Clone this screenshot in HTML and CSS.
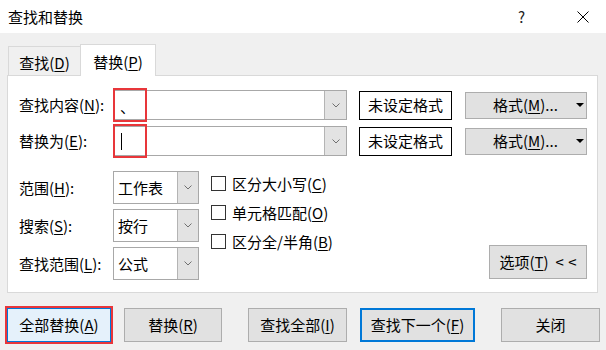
FILE: index.html
```html
<!DOCTYPE html>
<html>
<head>
    <meta charset="utf-8">
    <title>查找和替换</title>
    <link rel="stylesheet" href="styles.css">
</head>
<body>
    <div class="titlebar">
        <span class="title">查找和替换</span>
        <span class="help">?</span>
        <svg class="close" width="12" height="12" viewBox="0 0 12 12">
            <path d="M0.5 0.5 L11.5 11.5 M11.5 0.5 L0.5 11.5" stroke="#000" stroke-width="1" fill="none"/>
        </svg>
    </div>

    <div class="tabs">
        <div class="tab tab-find">查找(<u>D</u>)</div>
        <div class="tab tab-replace">替换(<u>P</u>)</div>
    </div>

    <div class="panel">
        <div class="field-row">
            <span class="label">查找内容(<u>N</u>):</span>
            <div class="combo">
                <span class="combo-text comma">、</span>
                <span class="combo-btn"><svg width="8" height="5" viewBox="0 0 8 5"><path d="M0.5 0.5 L4 4 L7.5 0.5" stroke="#707070" fill="none"/></svg></span>
                <span class="mark"></span>
            </div>
            <div class="unset">未设定格式</div>
            <button class="format-btn">格式(<u>M</u>)...<span class="caret-down"></span></button>
        </div>
        <div class="field-row">
            <span class="label">替换为(<u>E</u>):</span>
            <div class="combo">
                <span class="combo-text"><span class="caret"></span></span>
                <span class="combo-btn"><svg width="8" height="5" viewBox="0 0 8 5"><path d="M0.5 0.5 L4 4 L7.5 0.5" stroke="#707070" fill="none"/></svg></span>
                <span class="mark"></span>
            </div>
            <div class="unset">未设定格式</div>
            <button class="format-btn">格式(<u>M</u>)...<span class="caret-down"></span></button>
        </div>

        <div class="options">
            <div class="selects">
                <div class="select-row">
                    <span class="label">范围(<u>H</u>):</span>
                    <div class="combo combo-small">
                        <span class="combo-text">工作表</span>
                        <span class="combo-btn"><svg width="8" height="5" viewBox="0 0 8 5"><path d="M0.5 0.5 L4 4 L7.5 0.5" stroke="#707070" fill="none"/></svg></span>
                    </div>
                </div>
                <div class="select-row">
                    <span class="label">搜索(<u>S</u>):</span>
                    <div class="combo combo-small">
                        <span class="combo-text">按行</span>
                        <span class="combo-btn"><svg width="8" height="5" viewBox="0 0 8 5"><path d="M0.5 0.5 L4 4 L7.5 0.5" stroke="#707070" fill="none"/></svg></span>
                    </div>
                </div>
                <div class="select-row">
                    <span class="label">查找范围(<u>L</u>):</span>
                    <div class="combo combo-small">
                        <span class="combo-text">公式</span>
                        <span class="combo-btn"><svg width="8" height="5" viewBox="0 0 8 5"><path d="M0.5 0.5 L4 4 L7.5 0.5" stroke="#707070" fill="none"/></svg></span>
                    </div>
                </div>
            </div>

            <div class="checks">
                <label class="check"><span class="box"></span>区分大小写(<u>C</u>)</label>
                <label class="check"><span class="box"></span>单元格匹配(<u>O</u>)</label>
                <label class="check"><span class="box"></span>区分全/半角(<u>B</u>)</label>
            </div>

            <button class="btn more-btn">选项(<u>T</u>)<span class="arrows">&lt; &lt;</span></button>
        </div>
    </div>

    <div class="actions">
        <button class="btn btn-all">全部替换(<u>A</u>)</button>
        <button class="btn btn-replace">替换(<u>R</u>)</button>
        <button class="btn btn-findall">查找全部(<u>I</u>)</button>
        <button class="btn btn-next">查找下一个(<u>F</u>)</button>
        <button class="btn btn-close">关闭</button>
    </div>
</body>
</html>
```

FILE: styles.css
```css
body {
    margin: 0;
    width: 606px;
    height: 350px;
    overflow: hidden;
    background-color: #f0f0f0;
    font-family: "Noto Sans CJK SC", sans-serif;
    font-size: 15px;
    line-height: 20px;
    color: #000;
}
u {
    text-decoration-thickness: 1px;
    text-underline-offset: 2px;
}
.titlebar {
    display: flex;
    align-items: center;
    height: 33px;
    padding-left: 8px;
    background-color: #fff;
}
.help {
    margin-left: auto;
    margin-right: 52px;
    color: #222;
}
.close {
    margin-right: 17px;
}
.tabs {
    display: flex;
    align-items: flex-end;
    height: 31px;
    margin-top: 11px;
    padding-left: 8px;
}
.tab {
    display: flex;
    align-items: center;
    justify-content: center;
    box-sizing: border-box;
    height: 29px;
    padding-top: 3px;
    border: 1px solid #d9d9d9;
    border-bottom: none;
    background-color: #f0f0f0;
}
.tab-find {
    width: 72px;
    border-right: none;
}
.tab-replace {
    position: relative;
    z-index: 1;
    width: 76px;
    height: 32px;
    padding-top: 2px;
    margin-bottom: -1px;
    background-color: #fff;
}
.panel {
    margin: 0 8px 0 7px;
    padding: 14px 10px 12px 11px;
    background-color: #fff;
    border: 1px solid #d9d9d9;
}
.field-row {
    display: flex;
    align-items: center;
    height: 30px;
}
.field-row + .field-row {
    margin-top: 6px;
}
.label {
    flex: none;
    width: 94px;
}
.combo {
    position: relative;
    display: flex;
    flex: none;
    box-sizing: border-box;
    width: 234px;
    height: 30px;
    border: 1px solid #a8a8a8;
    background-color: #fff;
}
.combo-small {
    width: 86px;
    height: 33px;
}
.combo-text {
    display: flex;
    align-items: center;
    flex: 1;
    padding-left: 4px;
}
.comma {
    padding-left: 6px;
    padding-top: 4px;
}
.combo-btn {
    display: flex;
    align-items: center;
    justify-content: center;
    width: 21px;
    border-left: 1px solid #b4b4b4;
    background-color: #e3e3e3;
}
.combo-small .combo-btn {
    width: 20px;
}
.caret {
    width: 1px;
    height: 17px;
    margin-left: 3px;
    background-color: #000;
}
.mark {
    position: absolute;
    left: -1px;
    top: -3px;
    box-sizing: border-box;
    width: 34px;
    height: 34px;
    border: 2px solid #e8363a;
}
.unset {
    display: flex;
    align-items: center;
    justify-content: center;
    box-sizing: border-box;
    width: 93px;
    height: 29px;
    margin-left: 12px;
    border: 1px solid #000;
    background-color: #fff;
}
button {
    font: inherit;
    color: inherit;
    padding: 0;
    margin: 0;
}
.format-btn {
    display: flex;
    align-items: center;
    box-sizing: border-box;
    width: 122px;
    height: 27px;
    margin-left: 13px;
    padding: 0 2px 0 27px;
    border: 1px solid #adadad;
    background-color: #e1e1e1;
}
.caret-down {
    margin-left: auto;
    width: 0;
    height: 0;
    border-left: 4px solid transparent;
    border-right: 4px solid transparent;
    border-top: 4px solid #000;
}
.options {
    display: flex;
    margin-top: 15px;
}
.selects {
    display: flex;
    flex-direction: column;
    gap: 5px;
}
.select-row {
    display: flex;
    align-items: center;
    height: 33px;
}
.checks {
    display: flex;
    flex-direction: column;
    margin-top: -2px;
    margin-left: 12px;
}
.check {
    display: flex;
    align-items: center;
    height: 29px;
}
.box {
    box-sizing: border-box;
    width: 15px;
    height: 15px;
    margin-right: 6px;
    border: 1px solid #333;
    background-color: #fff;
}
.btn {
    display: flex;
    align-items: center;
    justify-content: center;
    box-sizing: border-box;
    height: 34px;
    border: 1px solid #adadad;
    background-color: #e1e1e1;
}
.more-btn {
    align-self: flex-end;
    width: 98px;
    margin-left: auto;
    margin-bottom: 1px;
}
.arrows {
    margin-left: 7px;
    word-spacing: 1px;
}
.actions {
    display: flex;
    margin-top: 15px;
    padding-left: 7px;
}
.btn-all {
    width: 104px;
    border-color: #0078d7;
    background-color: #e5f1fb;
    outline: 2px solid #e8363a;
}
.btn-replace {
    width: 98px;
    margin-left: 13px;
}
.btn-findall {
    width: 99px;
    margin-left: 26px;
}
.btn-next {
    width: 115px;
    margin-left: 13px;
    border: 2px solid #0078d7;
}
.btn-close {
    width: 99px;
    margin-left: 26px;
}
```
